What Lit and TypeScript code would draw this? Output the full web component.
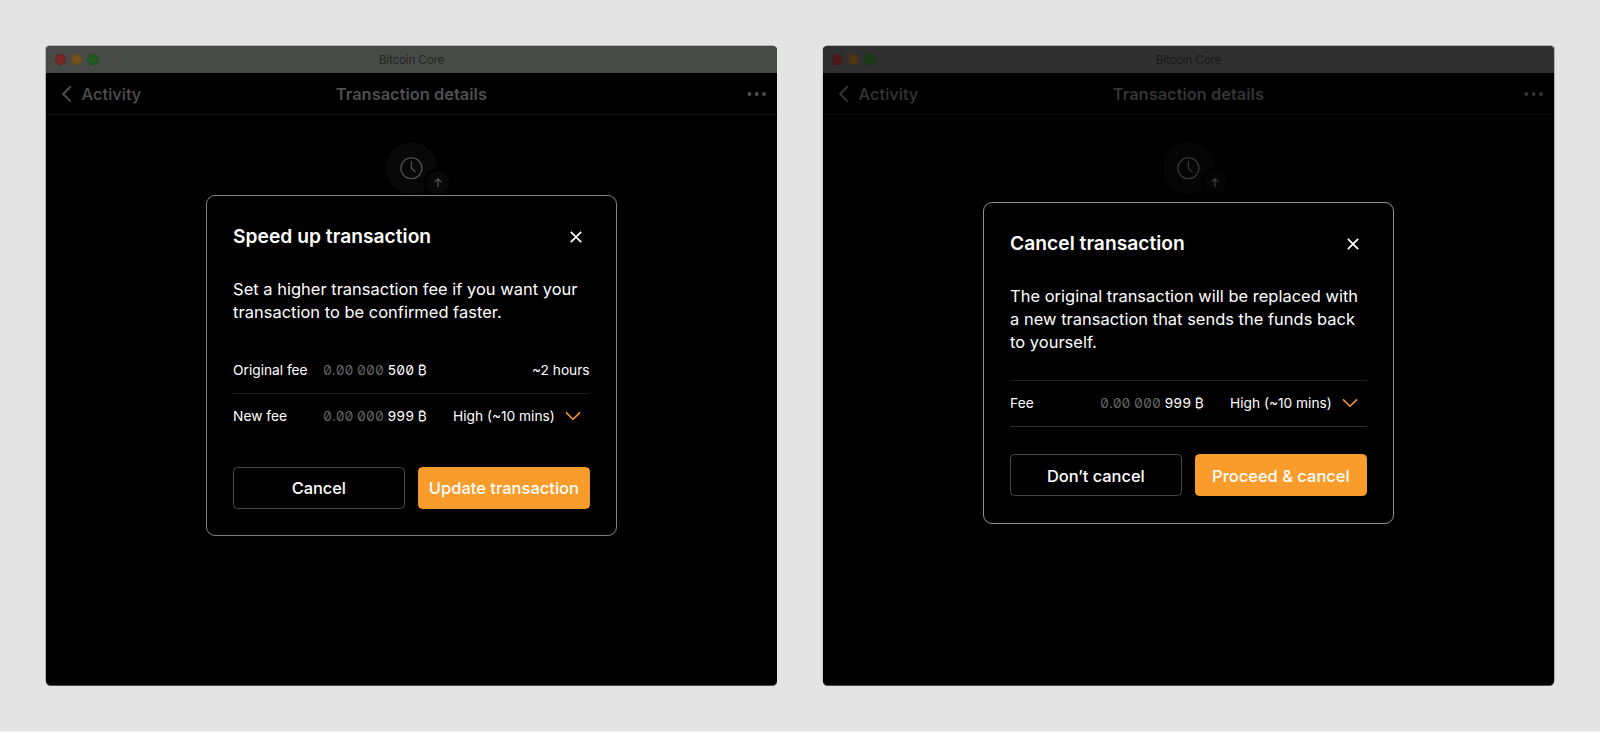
import { LitElement, html, css } from "lit";
import { customElement, property } from "lit/decorators.js";

interface Fee {
  label: string;
  dim: string;
  value: string;
  speed: string;
  selectable: boolean;
}

interface Dialog {
  heading: string;
  lines: string[];
  fees: Fee[];
  secondary: string;
  primary: string;
}

const speedUp: Dialog = {
  heading: "Speed up transaction",
  lines: ["Set a higher transaction fee if you want your", "transaction to be confirmed faster."],
  fees: [
    { label: "Original fee", dim: "0.00 000", value: "500 ₿", speed: "~2 hours", selectable: false },
    { label: "New fee", dim: "0.00 000", value: "999 ₿", speed: "High (~10 mins)", selectable: true },
  ],
  secondary: "Cancel",
  primary: "Update transaction",
};

const cancelTx: Dialog = {
  heading: "Cancel transaction",
  lines: [
    "The original transaction will be replaced with",
    "a new transaction that sends the funds back",
    "to yourself.",
  ],
  fees: [{ label: "Fee", dim: "0.00 000", value: "999 ₿", speed: "High (~10 mins)", selectable: true }],
  secondary: "Don’t cancel",
  primary: "Proceed & cancel",
};

@customElement("tx-dialog")
class TxDialog extends LitElement {
  @property({ attribute: false }) data!: Dialog;

  static styles = css`
    :host {
      display: block;
      box-sizing: border-box;
      width: 411px;
      padding: 27.4px 26.4px 26.6px 26.1px;
      border: 1px solid var(--dialog-edge);
      border-radius: 9px;
      background: #000;
      color: #fff;
    }
    .head {
      display: flex;
      justify-content: space-between;
      align-items: center;
      height: 27.4px;
      padding-right: 5.8px;
      margin-bottom: 27.4px;
    }
    h2 {
      margin: 0;
      font-size: 19.2px;
      font-weight: 600;
      letter-spacing: 0.03px;
      line-height: 27.4px;
    }
    .close {
      width: 16px;
      height: 16px;
      margin-top: -1px;
    }
    .line {
      font-size: 16.457px;
      letter-spacing: 0.02px;
      line-height: 22.86px;
      white-space: nowrap;
    }
    .fees {
      margin-top: 23.3px;
    }
    .fees.single {
      margin-top: 26px;
      border-top: 1px solid #202020;
      border-bottom: 1px solid #303030;
    }
    .fee {
      display: grid;
      grid-template-columns: 90px 130px 1fr auto;
      align-items: center;
      height: 46px;
      box-sizing: border-box;
      font-size: 13.714px;
      line-height: 20px;
      white-space: nowrap;
    }
    .single .fee {
      height: 45px;
    }
    .fee + .fee {
      padding-bottom: 2px;
      border-top: 1px solid #1f1f1f;
    }
    .amount {
      font-feature-settings: "zero", "tnum";
    }
    .dim {
      color: #666;
    }
    .speed {
      text-align: right;
    }
    .pick .speed {
      text-align: left;
    }
    .chevron {
      width: 18px;
      height: 12px;
      margin-right: 7.8px;
    }
    .buttons {
      display: grid;
      grid-template-columns: 1fr 1fr;
      gap: 13.7px;
      margin-top: 27.4px;
    }
    button {
      box-sizing: border-box;
      height: 42px;
      padding: 1px 0 0;
      border: 1px solid #484848;
      border-radius: 4.5px;
      background: #000;
      color: #fff;
      font: 500 16.457px/22px Inter, sans-serif;
      letter-spacing: -0.05px;
      white-space: nowrap;
    }
    .primary {
      border-color: #f99c2b;
      background: #f99c2b;
      letter-spacing: 0.03px;
    }
  `;

  render() {
    const d = this.data;
    return html`
      <div class="head">
        <h2>${d.heading}</h2>
        <svg class="close" viewBox="0 0 16 16" fill="none" stroke="#fff" stroke-width="1.7">
          <path d="M2.8 2.8 13.2 13.2M13.2 2.8 2.8 13.2" />
        </svg>
      </div>
      ${d.lines.map((l) => html`<div class="line">${l}</div>`)}
      <div class="fees ${d.fees.length === 1 ? "single" : ""}">
        ${d.fees.map(
          (f) => html`
            <div class="fee ${f.selectable ? "pick" : ""}">
              <span>${f.label}</span>
              <span class="amount"><span class="dim">${f.dim}</span> ${f.value}</span>
              <span class="speed">${f.speed}</span>
              ${f.selectable
                ? html`<svg class="chevron" viewBox="0 0 18 12" fill="none" stroke="#f99c2b" stroke-width="1.5">
                    <path d="M2 2.4 9 9.3 16 2.4" />
                  </svg>`
                : ""}
            </div>
          `,
        )}
      </div>
      <div class="buttons">
        <button>${d.secondary}</button>
        <button class="primary">${d.primary}</button>
      </div>
    `;
  }
}

@customElement("app-window")
class AppWindow extends LitElement {
  @property({ attribute: false }) dialog!: Dialog;

  static styles = css`
    :host {
      display: block;
      position: relative;
      width: 731px;
      height: 639px;
      border-radius: 4.5px;
      background: #000;
      color: var(--text);
    }
    .titlebar {
      display: grid;
      grid-template-columns: 1fr auto 1fr;
      align-items: center;
      height: 27px;
      border-radius: 4.5px 4.5px 0 0;
      background: var(--bar);
    }
    .lights {
      display: flex;
      gap: 5px;
      padding-left: 8.6px;
    }
    .light {
      box-sizing: border-box;
      width: 11.4px;
      height: 11.4px;
      border: 1px solid rgba(0, 0, 0, 0.12);
      border-radius: 50%;
    }
    .red {
      background: var(--red);
    }
    .amber {
      background: var(--amber);
    }
    .green {
      background: var(--green);
    }
    .app-name {
      font-size: 11.9px;
      letter-spacing: -0.28px;
      line-height: 16px;
      color: var(--bar-text);
      padding-top: 1px;
    }
    .nav {
      display: grid;
      grid-template-columns: 1fr auto 1fr;
      align-items: center;
      box-sizing: border-box;
      height: 42px;
      padding: 1px 10.2px 0 15px;
      border-bottom: 1px solid var(--rule);
      font-size: 16.457px;
      line-height: 22px;
    }
    .back {
      display: flex;
      align-items: center;
      gap: 8.6px;
      font-weight: 500;
    }
    .back svg {
      width: 12px;
      height: 18px;
    }
    .page-title {
      padding-right: 5px;
      font-weight: 600;
    }
    .more {
      justify-self: end;
      width: 20px;
      height: 6px;
    }
    .status {
      display: block;
      width: 66px;
      height: 56px;
      margin: 26px 0 0 339px;
    }
    .overlay {
      position: absolute;
      left: 160px;
      top: 149px;
    }
    .overlay.low {
      top: 156px;
    }
  `;

  render() {
    return html`
      <div class="titlebar">
        <div class="lights">
          <span class="light red"></span><span class="light amber"></span><span class="light green"></span>
        </div>
        <span class="app-name">Bitcoin Core</span>
        <span></span>
      </div>
      <div class="nav">
        <div class="back">
          <svg viewBox="0 0 12 18" fill="none" stroke="currentColor" stroke-width="2">
            <path d="M9.7 1.4 2.2 9 9.7 16.6" />
          </svg>
          <span>Activity</span>
        </div>
        <span class="page-title">Transaction details</span>
        <svg class="more" viewBox="0 0 20 6" fill="currentColor">
          <circle cx="2.4" cy="3" r="1.9" />
          <circle cx="9.7" cy="3" r="1.9" />
          <circle cx="17" cy="3" r="1.9" />
        </svg>
      </div>
      <svg class="status" viewBox="0 0 66 56" fill="none">
        <circle cx="26.4" cy="26.9" r="25.6" fill="var(--disc)" />
        <g stroke="var(--icon)" stroke-width="1.1">
          <circle cx="26.4" cy="27.2" r="10.5" />
          <path d="M26.4 20.3V27.4L30.6 31.2" />
        </g>
        <circle cx="53" cy="41.7" r="14.4" fill="#000" />
        <circle cx="53" cy="41.7" r="11.2" fill="var(--disc)" />
        <path d="M53 45.9V38M49.7 41.1 53 37.8 56.3 41.1" stroke="var(--icon)" stroke-width="1.2" />
      </svg>
      <tx-dialog
        class="overlay ${this.dialog.fees.length === 1 ? "low" : ""}"
        .data=${this.dialog}
      ></tx-dialog>
    `;
  }
}

@customElement("app-root")
class AppRoot extends LitElement {
  static styles = css`
    :host {
      display: flex;
      box-sizing: border-box;
      width: 1600px;
      height: 732px;
      gap: 46px;
      padding: 46px 0 0 46px;
      border-bottom: 1px solid #f3f3f3;
      background: #e4e4e4;
      font-family: Inter, sans-serif;
    }
    .first {
      --text: #4f4f4f;
      --bar: #484a48;
      --bar-text: #252625;
      --rule: #101010;
      --disc: #080808;
      --icon: #595959;
      --red: #772623;
      --amber: #76531c;
      --green: #225a22;
      --dialog-edge: #808080;
      box-shadow: 0 1px 0 rgba(0, 0, 0, 0.68), -1px -1px 0 rgba(50, 50, 50, 0.28);
    }
    .second {
      --text: #353535;
      --bar: #303030;
      --bar-text: #191919;
      --rule: #0a0a0a;
      --disc: #050505;
      --icon: #3d3d3d;
      --red: #4e1a18;
      --amber: #4e3714;
      --green: #193c18;
      --dialog-edge: #909090;
      box-shadow: 0 1px 0 rgba(0, 0, 0, 0.68), 1px -1px 0 rgba(40, 40, 40, 0.28), -1px 0 0 rgba(0, 0, 0, 0.12);
    }
  `;

  render() {
    return html`
      <app-window class="first" .dialog=${speedUp}></app-window>
      <app-window class="second" .dialog=${cancelTx}></app-window>
    `;
  }
}
